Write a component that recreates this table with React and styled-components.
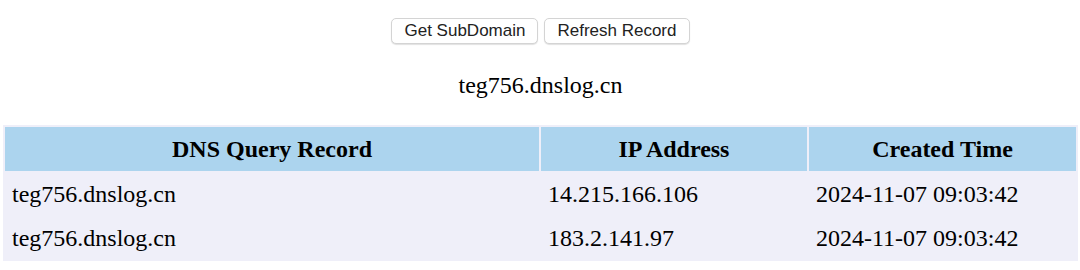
import React from "react";
import styled, { createGlobalStyle } from "styled-components";

const GlobalStyle = createGlobalStyle`
  body {
    margin: 0;
    background: #ffffff;
    font-family: "Liberation Serif", "Times New Roman", serif;
    color: #000;
  }
`;

const Page = styled.div`
  padding: 0 2px 0 3px;
`;

const Toolbar = styled.div`
  display: flex;
  justify-content: center;
  gap: 6px;
  padding-top: 18px;
`;

const Button = styled.button`
  height: 26px;
  padding: 0 12px;
  background: #ffffff;
  border: 1px solid #d4d4d4;
  border-radius: 5px;
  box-shadow: 0 1px 1px rgba(0, 0, 0, 0.12);
  font-family: "Liberation Sans", Arial, sans-serif;
  font-size: 17px;
  color: #222;
  cursor: pointer;
`;

const Domain = styled.div`
  text-align: center;
  font-size: 24px;
  line-height: 28px;
  margin-top: 27px;
`;

const Table = styled.table`
  width: 100%;
  margin-top: 26px;
  border-spacing: 2px;
  background: #efeff9;
  font-size: 24px;
`;

const Th = styled.th`
  background: #acd4ee;
  height: 44px;
  padding: 0;
  font-weight: bold;
  text-align: center;
  width: ${({ w }) => w};
`;

const Td = styled.td`
  background: #efeff9;
  height: 42px;
  padding: 0 0 0 7px;
  text-align: left;
`;

const records = [
  { host: "teg756.dnslog.cn", ip: "14.215.166.106", time: "2024-11-07 09:03:42" },
  { host: "teg756.dnslog.cn", ip: "183.2.141.97", time: "2024-11-07 09:03:42" },
];

export default function App() {
  return (
    <Page>
      <GlobalStyle />
      <Toolbar>
        <Button>Get SubDomain</Button>
        <Button>Refresh Record</Button>
      </Toolbar>
      <Domain>teg756.dnslog.cn</Domain>
      <Table>
        <thead>
          <tr>
            <Th w="534px">DNS Query Record</Th>
            <Th w="266px">IP Address</Th>
            <Th>Created Time</Th>
          </tr>
        </thead>
        <tbody>
          {records.map((r, i) => (
            <tr key={i}>
              <Td>{r.host}</Td>
              <Td>{r.ip}</Td>
              <Td>{r.time}</Td>
            </tr>
          ))}
        </tbody>
      </Table>
    </Page>
  );
}
